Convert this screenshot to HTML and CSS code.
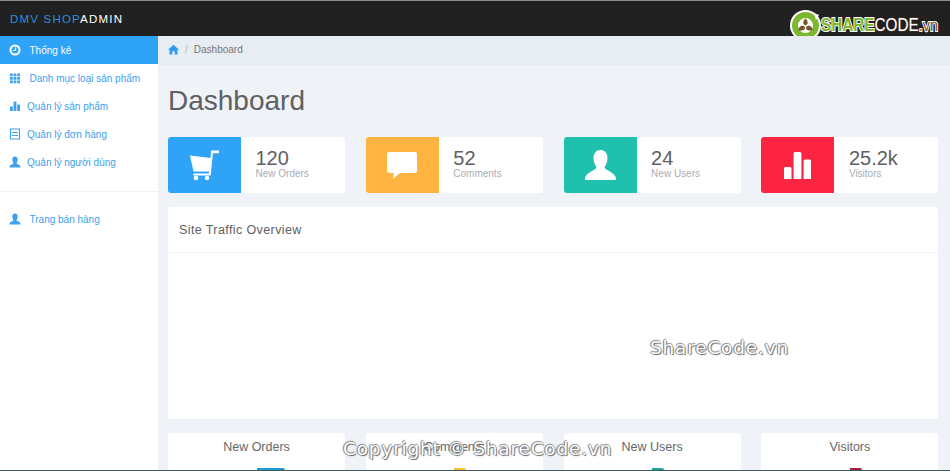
FILE: index.html
```html
<!DOCTYPE html>
<html>
<head>
    <title>DMV Shop Admin</title>
    <link rel="stylesheet" href="styles.css">
</head>
<body>
    <div class="page">
        <div class="topbar">
            <div class="brand">DMV SHOP<span class="brand-admin">ADMIN</span></div>
            <div class="share-logo">
                <svg class="share-mark" width="31" height="31" viewBox="0 0 31 31">
                    <circle cx="15.5" cy="15.5" r="15.500" fill="#fff"/>
                    <circle cx="15.5" cy="15.5" r="10.500" fill="none" stroke="#7cb82f" stroke-width="6"/>
                    <path d="M15.500 8.500c2 1.500 2.500 3.500 2 5.500l-2 1.500-2-1.500c-.5-2 0-4 2-5.500zM8.500 20c.2-2.500 1.800-4 3.800-4.500l2.400 1 .2 2.500c-1.500 1.500-3.800 2-6.400 1zM22.500 20c-2.600 1-4.900.5-6.400-1l.2-2.500 2.400-1c2 .5 3.600 2 3.800 4.500z" fill="#7a5230"/>
                    <path d="M24 3l5 2-3 5z" fill="#fff"/>
                </svg>
                <span class="share-text"><span class="share-green">SHARE</span><span class="share-brown">CODE</span><span class="share-vn">.vn</span></span>
            </div>
        </div>
        <div class="main">
            <div class="sidebar">
                <div class="menu-item active">
                    <svg class="menu-icon" viewBox="0 0 12 12"><circle cx="6" cy="6" r="4.500" fill="none" stroke="currentColor" stroke-width="2"/><path d="M6.500 3.500v3h-2.500" fill="none" stroke="currentColor" stroke-width="1.200"/></svg>
                    <span class="menu-label wide">Thống kê</span>
                </div>
                <div class="menu-item">
                    <svg class="menu-icon" viewBox="0 0 12 12"><path d="M1 1.500h2.800v2.800H1zM4.600 1.500h2.800v2.800H4.600zM8.200 1.500H11v2.800H8.200zM1 5h2.800v2.800H1zM4.600 5h2.800v2.800H4.600zM8.200 5H11v2.800H8.200zM1 8.500h2.800v2.800H1zM4.600 8.500h2.800v2.800H4.600zM8.200 8.500H11v2.800H8.200z" fill="currentColor"/></svg>
                    <span class="menu-label wide">Danh mục loại sản phẩm</span>
                </div>
                <div class="menu-item">
                    <svg class="menu-icon" viewBox="0 0 12 12"><path d="M1 6.500h2.800V11H1zM4.600 1.500h2.800V11H4.600zM8.200 4.500H11V11H8.200z" fill="currentColor"/></svg>
                    <span class="menu-label">Quản lý sản phẩm</span>
                </div>
                <div class="menu-item">
                    <svg class="menu-icon" viewBox="0 0 12 12"><path d="M1.500 1h9v10h-9z" fill="none" stroke="currentColor" stroke-width="1.100"/><path d="M3 4.500h6M3 7.500h6" stroke="currentColor" stroke-width="1"/></svg>
                    <span class="menu-label">Quản lý đơn hàng</span>
                </div>
                <div class="menu-item">
                    <svg class="menu-icon" viewBox="0 0 12 12"><path d="M6 .5c1.700 0 2.700 1.300 2.700 3S7.900 6.600 7.300 7.300c.2.800 4.200 1.300 4.200 3.700v.5H.5V11c0-2.400 4-2.900 4.200-3.700C4.100 6.600 3.300 5.200 3.300 3.500S4.300.5 6 .5z" fill="currentColor"/></svg>
                    <span class="menu-label">Quản lý người dùng</span>
                </div>
                <div class="menu-divider"></div>
                <div class="menu-item">
                    <svg class="menu-icon" viewBox="0 0 12 12"><path d="M6 .5c1.700 0 2.700 1.300 2.700 3S7.900 6.600 7.300 7.300c.2.800 4.200 1.300 4.200 3.700v.5H.5V11c0-2.400 4-2.900 4.200-3.700C4.100 6.600 3.300 5.200 3.300 3.500S4.300.5 6 .5z" fill="currentColor"/></svg>
                    <span class="menu-label wide">Trang bán hàng</span>
                </div>
            </div>
            <div class="content">
                <div class="breadcrumb">
                    <svg class="home-icon" width="11" height="11" viewBox="0 0 12 12"><path d="M6 .8L12 6.300H10.300V11.500H7.300V7.800H4.700V11.500H1.700V6.300H0z" fill="#2e9bf0"/></svg>
                    <span class="crumb-sep">/</span>
                    <span class="crumb">Dashboard</span>
                </div>
                <div class="inner">
                    <h1 class="page-title">Dashboard</h1>
                    <div class="stats">
                        <div class="stat-card">
                            <div class="stat-icon blue">
                                <svg width="29" height="31" viewBox="0 0 29 31"><path d="M0 5.500L21 8 19.300 21.500 3.500 21.500z" fill="#fff"/><path d="M22 2.500L19.800 24.500H3.500" fill="none" stroke="#fff" stroke-width="2"/><circle cx="6" cy="28" r="2.300" fill="#fff"/><circle cx="17" cy="28" r="2.300" fill="#fff"/><path d="M21 .5h8v2.800h-8z" fill="#fff"/></svg>
                            </div>
                            <div class="stat-text"><div class="stat-num">120</div><div class="stat-name">New Orders</div></div>
                        </div>
                        <div class="stat-card">
                            <div class="stat-icon orange">
                                <svg width="30" height="27" viewBox="0 0 30 27"><path d="M2 0h26a2 2 0 012 2v17a2 2 0 01-2 2H13l-7 6 .8-6H2a2 2 0 01-2-2V2a2 2 0 012-2z" fill="#fff"/></svg>
                            </div>
                            <div class="stat-text"><div class="stat-num">52</div><div class="stat-name">Comments</div></div>
                        </div>
                        <div class="stat-card">
                            <div class="stat-icon teal">
                                <svg width="31" height="30" viewBox="0 0 31 30"><path d="M15.500 0c4.300 0 7 3.500 7 8 0 3.700-1.500 7-3 9 0 3.500 11.500 5.500 11.500 11.500V30H0v-1.500C0 22.500 11.500 20.500 11.500 17c-1.500-2-3-5.300-3-9 0-4.500 2.700-8 7-8z" fill="#fff"/></svg>
                            </div>
                            <div class="stat-text"><div class="stat-num">24</div><div class="stat-name">New Users</div></div>
                        </div>
                        <div class="stat-card">
                            <div class="stat-icon red">
                                <svg width="27" height="27" viewBox="0 0 27 27"><path d="M1.500 15h4.500a1.500 1.500 0 011.500 1.500V27H0V16.500A1.500 1.500 0 011.500 15zM11.100 0h4.800a1.500 1.500 0 011.500 1.500V27H9.600V1.500A1.500 1.500 0 0111.100 0zM21.100 7.500h4.400A1.500 1.500 0 0127 9V27h-7.400V9a1.500 1.500 0 011.500-1.500z" fill="#fff"/></svg>
                            </div>
                            <div class="stat-text"><div class="stat-num">25.2k</div><div class="stat-name">Visitors</div></div>
                        </div>
                    </div>
                    <div class="panel">
                        <div class="panel-title">Site Traffic Overview</div>
                        <div class="panel-body"></div>
                    </div>
                    <div class="stats">
                        <div class="chart-card"><div class="chart-title">New Orders</div><div class="chart-arc arc-blue"></div></div>
                        <div class="chart-card"><div class="chart-title">Comments</div><div class="chart-arc arc-orange"></div></div>
                        <div class="chart-card"><div class="chart-title">New Users</div><div class="chart-arc arc-teal"></div></div>
                        <div class="chart-card"><div class="chart-title">Visitors</div><div class="chart-arc arc-red"></div></div>
                    </div>
                </div>
            </div>
        </div>
        <div class="mark-center">ShareCode.vn</div>
        <div class="mark-bottom">Copyright © ShareCode.vn</div>
    </div>
</body>
</html>
```

FILE: styles.css
```css
html, body {
    margin: 0;
    height: 100%;
    overflow: hidden;
}

body {
    font-family: "Liberation Sans", Arial, sans-serif;
    color: #58595b;
    background: #eff3f8;
}

.page {
    position: relative;
    height: 471px;
    overflow: hidden;
    display: flex;
    flex-direction: column;
    border-top: 1px solid #8a8a8a;
    border-bottom: 1px solid #3d5a60;
    box-sizing: border-box;
}

.topbar {
    height: 35px;
    flex: none;
    background: #212121;
    display: flex;
    align-items: center;
    justify-content: space-between;
    padding: 0 0 0 10px;
}

.brand {
    font-size: 11.500px;
    letter-spacing: 1.200px;
    color: #2f8fdc;
}

.brand-admin {
    color: #fff;
}

.share-logo {
    display: flex;
    align-items: center;
    height: 35px;
    padding-top: 14px;
    box-sizing: border-box;
    margin-right: 12px;
    overflow: visible;
}

.share-mark {
    flex: none;
}

.share-text {
    display: inline-block;
    font-size: 18px;
    font-weight: bold;
    paint-order: stroke fill;
    transform: scaleX(0.85);
    transform-origin: left center;
    margin-right: -21px;
}

.share-green {
    color: #7cb82f;
    -webkit-text-stroke: 2px #fff;
}

.share-brown {
    color: #fff;
    font-weight: normal;
    -webkit-text-stroke: 0.7px #7a5230;
}

.share-vn {
    color: #7a5230;
    font-weight: normal;
    font-size: 17px;
    -webkit-text-stroke: 2px #fff;
}

.main {
    flex: 1;
    display: flex;
    min-height: 0;
}

.sidebar {
    width: 158px;
    flex: none;
    background: #fff;
    font-size: 10px;
    color: #3ba1f0;
}

.menu-item {
    height: 28px;
    display: flex;
    align-items: center;
    padding-left: 9px;
}

.menu-item.active {
    background: #2ea3f8;
    color: #fff;
}

.menu-icon {
    width: 12px;
    height: 12px;
    flex: none;
}

.menu-label {
    margin-left: 6px;
}

.menu-label.wide {
    margin-left: 8.500px;
}

.menu-divider {
    height: 1px;
    background: #f0f3f6;
    margin: 15px 0 13px;
}

.content {
    flex: 1;
    min-width: 0;
    display: flex;
    flex-direction: column;
}

.breadcrumb {
    height: 29px;
    flex: none;
    background: #e8ecf3;
    display: flex;
    align-items: center;
    padding: 0 0 2px 10px;
    box-sizing: border-box;
    font-size: 10px;
    color: #777;
}

.crumb-sep {
    margin: 0 6px 0 6px;
    color: #bbb;
}

.inner {
    padding: 0 12px 0 10px;
}

.page-title {
    margin: 20px 0 20px;
    font-size: 28px;
    line-height: 32px;
    font-weight: normal;
    color: #5f6062;
}

.stats {
    display: flex;
    gap: 20.800px;
}

.stat-card {
    width: 177px;
    height: 56px;
    flex: none;
    display: flex;
    background: #fff;
    border-radius: 3px;
    overflow: hidden;
}

.stat-icon {
    width: 73px;
    flex: none;
    display: flex;
    align-items: center;
    justify-content: center;
}

.blue { background: #2ea3f8; }
.orange { background: #ffb340; }
.teal { background: #1fc0ad; }
.red { background: #fb2441; }

.stat-text {
    padding: 11px 0 0 14.500px;
}

.stat-num {
    font-size: 20px;
    line-height: 20px;
    color: #5f6062;
}

.stat-name {
    font-size: 10px;
    line-height: 12px;
    color: #a8adb5;
}

.panel {
    margin-top: 14px;
    margin-bottom: 14px;
    height: 212px;
    background: #fff;
    border-radius: 3px;
}

.panel-title {
    height: 46px;
    box-sizing: border-box;
    line-height: 46px;
    padding-left: 11px;
    font-size: 12.500px;
    letter-spacing: 0.400px;
    border-bottom: 1px solid #f3f5f8;
    color: #5f6062;
}

.chart-card {
    width: 177px;
    height: 60px;
    flex: none;
    background: #fff;
    border-radius: 3px;
    text-align: center;
    overflow: hidden;
}

.chart-title {
    font-size: 12.500px;
    line-height: 28px;
    color: #66686b;
}

.chart-arc {
    width: 12px;
    height: 2px;
    margin: 7px 0 0 50%;
    border-top-right-radius: 2px;
}

.arc-blue { background: #1f9bd6; width: 28px; }
.arc-orange { background: #f2c230; }
.arc-teal { background: #1fa79a; }
.arc-red { background: #a5203f; }

.mark-center,
.mark-bottom {
    position: absolute;
    font-family: "DejaVu Sans", sans-serif;
    font-size: 18.500px;
    letter-spacing: 0.800px;
    color: #fff;
    text-shadow: 1px 1px 1px #666, -1px 0 1px #777, 0 -1px 1px #888;
}

.mark-center {
    left: 650px;
    top: 336px;
}

.mark-bottom {
    left: 343px;
    top: 437px;
}
```
